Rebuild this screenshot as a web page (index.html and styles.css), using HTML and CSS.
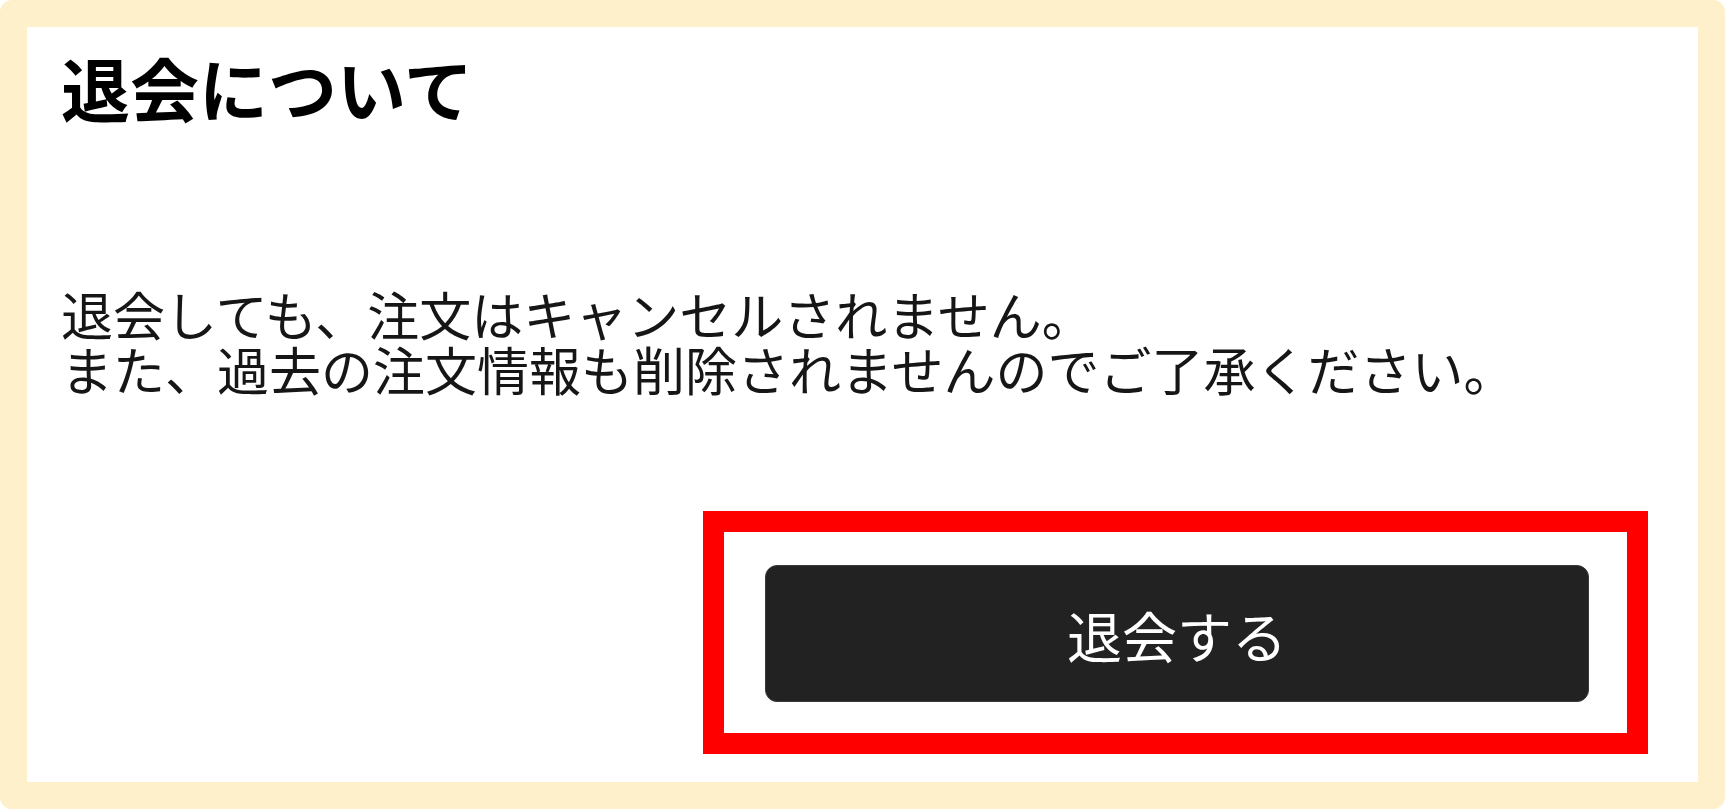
FILE: index.html
```html
<!DOCTYPE html>
<html lang="ja">
<head>
<meta charset="utf-8">
<title>退会について</title>
<link rel="stylesheet" href="styles.css">
</head>
<body>
<div class="frame">
  <h1 class="title">退会について</h1>
  <p class="notice">退会しても、注文はキャンセルされません。<br>また、過去の注文情報も削除されませんのでご了承ください。</p>
  <div class="mark">
    <button class="leave-button" type="button">退会する</button>
  </div>
</div>
</body>
</html>
```

FILE: styles.css
```css
html, body {
  margin: 0;
  height: 100%;
}
body {
  background: #ffffff;
  color: #111111;
  font-family: "Noto Sans CJK JP", "Noto Sans", sans-serif;
}
.frame {
  box-sizing: border-box;
  height: 100%;
  border: 27px solid #fff0cc;
  border-radius: 12px;
  padding: 20px 50px 28px 34px;
  display: flex;
  flex-direction: column;
}
.title {
  margin: 0;
  font-size: 69px;
  line-height: 80px;
  font-weight: bold;
  color: #000000;
}
.notice {
  margin: 159px 0 0;
  font-size: 52px;
  line-height: 55px;
  color: #161616;
}
.mark {
  margin-top: auto;
  align-self: flex-end;
  box-sizing: border-box;
  width: 945px;
  height: 243px;
  border: 21px solid #ff0000;
  padding: 33px 38px 32px 41px;
}
.leave-button {
  display: block;
  width: 100%;
  height: 137px;
  border: 1px solid #3a3a3a;
  border-radius: 12px;
  background: #222222;
  color: #ffffff;
  font-family: "Noto Sans CJK JP", "Noto Sans", sans-serif;
  font-size: 55px;
  padding: 0;
  cursor: pointer;
}
```
